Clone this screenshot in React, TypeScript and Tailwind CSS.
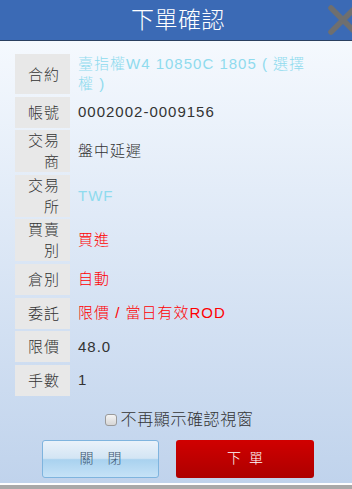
const rows: { label: string; value: string; color: string }[] = [
  { label: "合約", value: "臺指權W4 10850C 1805 ( 選擇權 )", color: "text-[#8fdbee]" },
  { label: "帳號", value: "0002002-0009156", color: "text-[#333]" },
  { label: "交易商", value: "盤中延遲", color: "text-[#333]" },
  { label: "交易所", value: "TWF", color: "text-[#8fdbee]" },
  { label: "買賣別", value: "買進", color: "text-[#ff0000]" },
  { label: "倉別", value: "自動", color: "text-[#ff0000]" },
  { label: "委託", value: "限價 / 當日有效ROD", color: "text-[#ff0000]" },
  { label: "限價", value: "48.0", color: "text-[#333]" },
  { label: "手數", value: "1", color: "text-[#333]" },
];

export default function App() {
  return (
    <div className="relative w-[352px] h-[489px] overflow-hidden bg-[#a9a9a9] font-light font-['Liberation_Sans','Noto_Sans_CJK_TC',sans-serif]">
      {/* Header */}
      <div className="h-[41px] bg-[#3b6ab5] border-b border-[#2a3f60] flex items-center justify-center">
        <span className="text-white text-[23px] tracking-[0.5px] pl-[4px]">下單確認</span>
      </div>
      <svg className="absolute left-[327px] top-[4px]" width="32" height="31" viewBox="0 0 32 31">
        <path d="M4 4 L28 28 M28 4 L4 28" stroke="#6f6f6f" strokeWidth="5.5" strokeLinecap="round" />
      </svg>

      {/* Body */}
      <div className="h-[444px] bg-gradient-to-b from-[#f5f9fe] to-[#c0d3ec] border-b-2 border-white">
        <div className="pt-[13px] pl-[15px] pr-[40px] flex flex-col gap-y-[2.6px]">
          {rows.map((r) => (
            <div key={r.label} className="flex">
              <div className="w-[55px] shrink-0 min-h-[31px] bg-[#e8e8e8] text-[#333] text-[15px] tracking-[1px] leading-[21px] text-right pl-[11px] pr-[10px] flex items-center justify-end">
                <span>{r.label}</span>
              </div>
              <div className={`flex-1 pl-[8px] text-[15px] tracking-[1px] leading-[20px] flex items-center ${r.color}`}>
                <span>{r.value}</span>
              </div>
            </div>
          ))}
        </div>

        {/* Checkbox */}
        <div className="mt-[14px] flex items-center justify-center pl-[6px]">
          <span className="w-[12px] h-[12px] rounded-[3px] border border-[#9a9a9a] bg-gradient-to-b from-[#f4f4f4] to-[#d6d6d6]" />
          <span className="ml-[4px] text-[16px] tracking-[0.6px] text-[#333] leading-[20px]">不再顯示確認視窗</span>
        </div>

        {/* Buttons */}
        <div className="mt-[10px] flex pl-[42px] gap-[17px]">
          <button className="w-[117px] h-[38px] rounded-[3px] border border-[#7fb4de] bg-[linear-gradient(to_bottom,#eaf2fa_0%,#d3e5f4_48%,#a9d2ef_52%,#c6e2f7_100%)] text-[#3a5570] text-[14px]">
            關　閉
          </button>
          <button className="w-[138px] h-[38px] rounded-[3px] bg-gradient-to-b from-[#d00000] to-[#ad0000] text-white text-[14px] tracking-[8px] pl-[8px]">
            下單
          </button>
        </div>
      </div>
    </div>
  );
}
